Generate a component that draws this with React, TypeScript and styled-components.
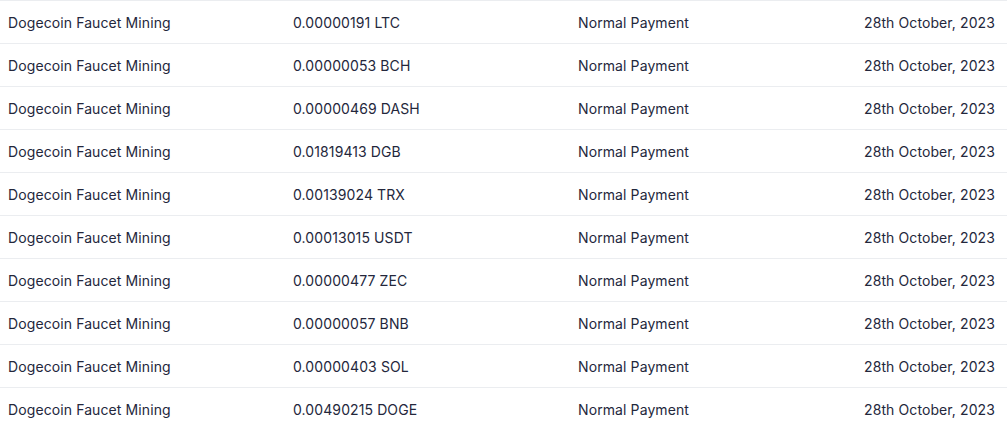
import React from "react";
import styled, { createGlobalStyle } from "styled-components";

const Global = createGlobalStyle`
  html, body { margin: 0; padding: 0; background: #ffffff; }
  body { font-family: Inter, "Noto Sans", Arial, sans-serif; }
`;

const Table = styled.div`
  width: 1007px;
  display: flex;
  flex-direction: column;
`;

const Row = styled.div`
  display: grid;
  grid-template-columns: 285px 285px 285px 1fr;
  height: 43px;
  box-sizing: border-box;
  border-top: 1px solid #ebedf0;
  align-items: center;
  padding-top: 2px;
`;

const Cell = styled.div<{ $right?: boolean }>`
  font-size: 14px;
  line-height: 20px;
  letter-spacing: 0.1px;
  color: #24273c;
  padding: 0 ${(p) => (p.$right ? "12px" : "8px")} 0 8px;
  text-align: ${(p) => (p.$right ? "right" : "left")};
  white-space: nowrap;
`;

const rows = [
  "0.00000191 LTC",
  "0.00000053 BCH",
  "0.00000469 DASH",
  "0.01819413 DGB",
  "0.00139024 TRX",
  "0.00013015 USDT",
  "0.00000477 ZEC",
  "0.00000057 BNB",
  "0.00000403 SOL",
  "0.00490215 DOGE",
];

export default function App() {
  return (
    <>
      <Global />
      <Table>
        {rows.map((amt, i) => (
          <Row key={i}>
            <Cell>Dogecoin Faucet Mining</Cell>
            <Cell>{amt}</Cell>
            <Cell>Normal Payment</Cell>
            <Cell $right>28th October, 2023</Cell>
          </Row>
        ))}
      </Table>
    </>
  );
}
